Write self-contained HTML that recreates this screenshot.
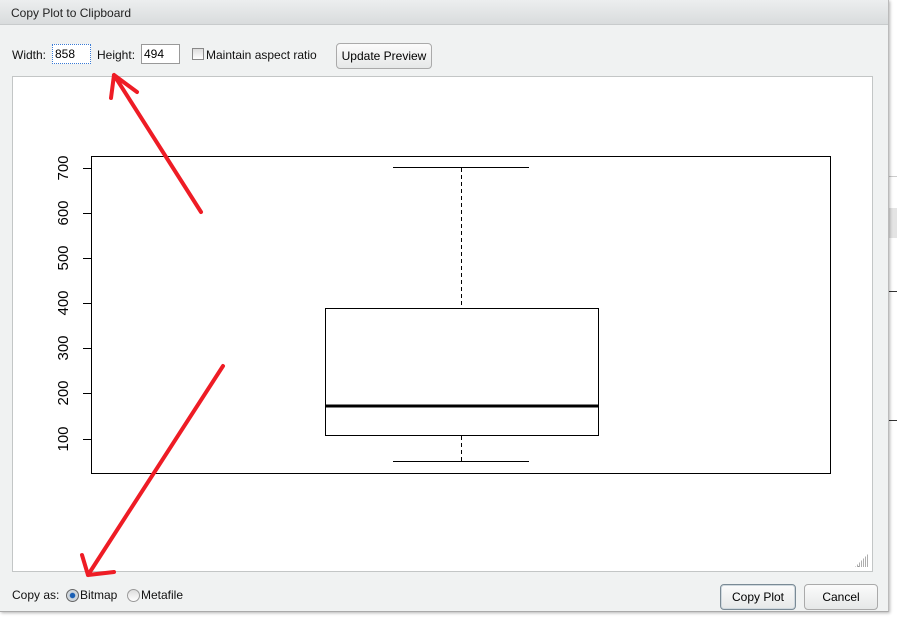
<!DOCTYPE html>
<html><head><meta charset="utf-8"><style>
body{margin:0;width:897px;height:619px;background:#fff;overflow:hidden;font-family:"Liberation Sans",sans-serif;position:relative}
.dlg{position:absolute;left:0;top:0;width:888px;height:611px;background:#f0f2f2;border-right:1px solid #bbb;border-bottom:1px solid #aaa;box-shadow:1px 1px 3px rgba(0,0,0,.3)}
.title{position:absolute;left:0;top:0;width:888px;height:25px;background:linear-gradient(#eceeef,#d9dcdd);border-bottom:1px solid #c8cbcc;font-size:12px;color:#222;line-height:27px;padding-left:11px;box-sizing:border-box}
.t{position:absolute;font-size:12px;color:#111}
.inp{position:absolute;height:20px;background:#fff;border:1px solid #999;box-sizing:border-box;font-size:12px;line-height:18px;padding-left:2px}
.btn{position:absolute;border:1px solid #aaa;border-radius:4px;background:linear-gradient(#fbfbfb,#e6e8e8);font-size:12px;text-align:center;box-sizing:border-box}
.plot{position:absolute;left:12px;top:76px;width:861px;height:496px;background:#fff;border:1px solid #c3c6c6;box-sizing:border-box}
</style></head><body>
<div style="position:absolute;left:889px;top:176px;width:8px;height:1px;background:#ccc"></div>
<div style="position:absolute;left:889px;top:208px;width:8px;height:30px;background:#e4e4e4"></div>
<div style="position:absolute;left:889px;top:291px;width:8px;height:1px;background:#333"></div>
<div style="position:absolute;left:889px;top:420px;width:8px;height:1px;background:#333"></div>
<div class="dlg">
<div class="title">Copy Plot to Clipboard</div>
<div class="t" style="left:12px;top:48px">Width:</div>
<div class="inp" style="left:52px;top:44px;width:39px;border:1px dotted #3a7bd5">858</div>
<div class="t" style="left:97px;top:48px">Height:</div>
<div class="inp" style="left:141px;top:44px;width:39px">494</div>
<div style="position:absolute;left:192px;top:48px;width:12px;height:12px;border:1px solid #888;background:linear-gradient(#ddd,#fff);box-sizing:border-box"></div>
<div class="t" style="left:206px;top:48px">Maintain aspect ratio</div>
<div class="btn" style="left:336px;top:43px;width:96px;height:26px;line-height:24px">Update Preview</div>
<div class="plot"></div>
<svg style="position:absolute;left:0;top:0" width="889" height="611">
<g stroke="#000" fill="none" stroke-width="1">
<rect x="91.5" y="156.5" width="739" height="317"/>
<line x1="83" y1="168.5" x2="91" y2="168.5"/><line x1="83" y1="213.5" x2="91" y2="213.5"/><line x1="83" y1="258.5" x2="91" y2="258.5"/><line x1="83" y1="303.5" x2="91" y2="303.5"/><line x1="83" y1="348.5" x2="91" y2="348.5"/><line x1="83" y1="393.5" x2="91" y2="393.5"/><line x1="83" y1="439.5" x2="91" y2="439.5"/>
<rect x="325.5" y="308.5" width="273" height="127"/>
<line x1="393" y1="167.5" x2="529" y2="167.5"/><line x1="393" y1="461.5" x2="529" y2="461.5"/>
<line x1="461.5" y1="168" x2="461.5" y2="308" stroke-dasharray="4,3"/><line x1="461.5" y1="436" x2="461.5" y2="461" stroke-dasharray="4,3"/>
<line x1="325" y1="406" x2="599" y2="406" stroke-width="3"/>
</g>
<g font-family="Liberation Sans" font-size="15" fill="#000" text-anchor="middle">
<text transform="translate(68,168) rotate(-90)">700</text>
<text transform="translate(68,213) rotate(-90)">600</text>
<text transform="translate(68,258) rotate(-90)">500</text>
<text transform="translate(68,303) rotate(-90)">400</text>
<text transform="translate(68,348) rotate(-90)">300</text>
<text transform="translate(68,393) rotate(-90)">200</text>
<text transform="translate(68,439) rotate(-90)">100</text>
</g>
<g stroke="#ee1c25" stroke-width="4" stroke-linecap="round" fill="none">
<path d="M201 212 L114 75 M114 75 L111 98 M114 75 L137 92"/>
<path d="M223 366 L88 575 M88 575 L82 555 M88 575 L114 572"/>
</g>
<g fill="#999"><rect x="858" y="566" width="1" height="1"/></g>
</svg>
<div style="position:absolute;left:855px;top:553px;width:14px;height:14px;background:repeating-linear-gradient(90deg,#999 0 1px,transparent 1px 2px);clip-path:polygon(100% 0,100% 100%,0 100%);opacity:.8"></div>
<div class="t" style="left:12px;top:588px">Copy as:</div>
<div style="position:absolute;left:66px;top:589px;width:11px;height:11px;border-radius:50%;border:1px solid #666;background:radial-gradient(#1a5fb4 30%,#cfd6dc 40%)"></div>
<div class="t" style="left:80px;top:588px">Bitmap</div>
<div style="position:absolute;left:127px;top:589px;width:11px;height:11px;border-radius:50%;border:1px solid #999;background:linear-gradient(#ddd,#fff)"></div>
<div class="t" style="left:141px;top:588px">Metafile</div>
<div class="btn" style="left:720px;top:584px;width:76px;height:26px;line-height:24px;border:1px solid #7a8a95;box-shadow:inset 0 0 0 1px #cfd8de">Copy Plot</div>
<div class="btn" style="left:804px;top:584px;width:74px;height:26px;line-height:24px">Cancel</div>
</div>
</body></html>
